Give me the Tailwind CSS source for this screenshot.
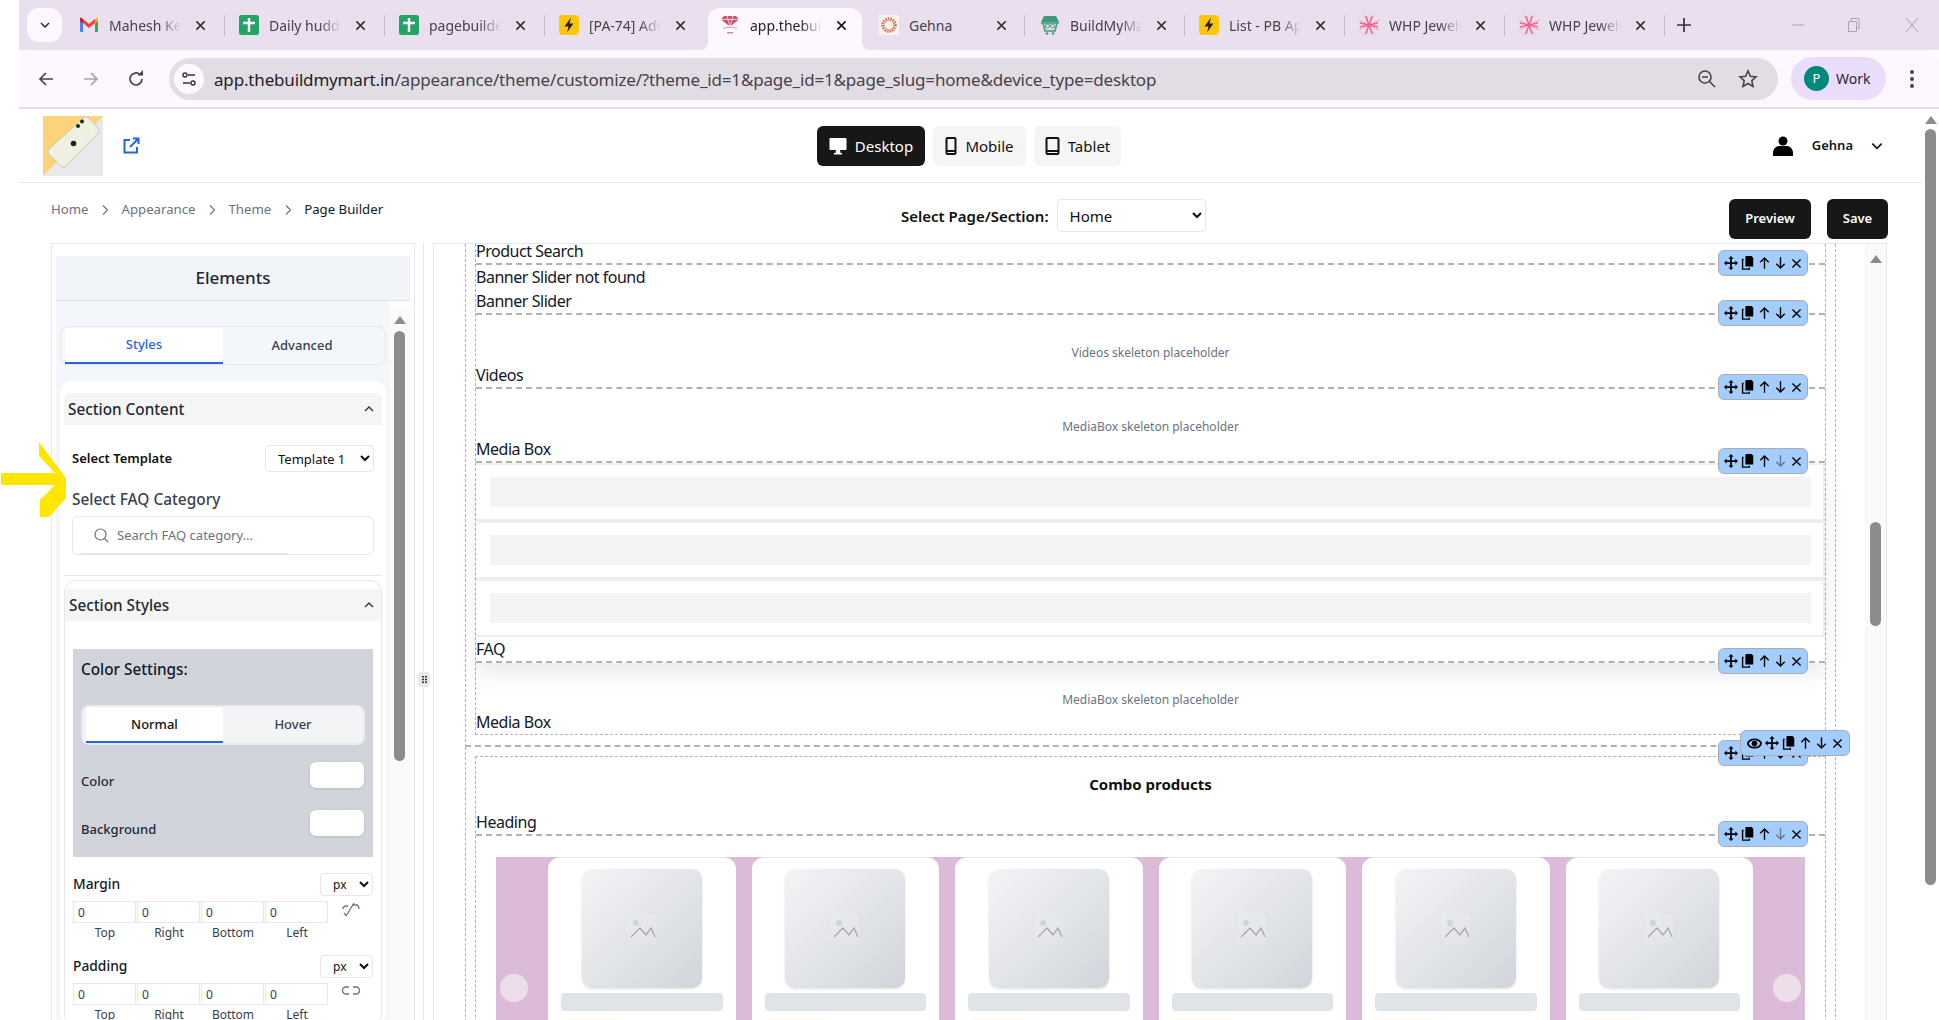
<!DOCTYPE html>
<html lang="en">
<head>
    <meta charset="UTF-8">
    <title>app.thebuildmymart.in</title>
    <script src="https://cdn.jsdelivr.net/npm/@tailwindcss/browser@4"></script>
</head>
<body class="w-[1939px] h-[1020px] overflow-hidden bg-white pl-[19px] font-['Noto_Sans','Open_Sans',sans-serif] text-[#111827]">

<!-- shared icons -->
<svg class="hidden">
    <symbol id="i-move" viewBox="0 0 16 16"><path fill="currentColor" d="M8 0l3 3H9v4h4V5l3 3-3 3V9H9v4h2l-3 3-3-3h2V9H3v2L0 8l3-3v2h4V3H5z"/></symbol>
    <symbol id="i-copy" viewBox="0 0 16 16"><path fill="currentColor" d="M6 0h6l2 2v10H6a1 1 0 0 1-1-1V1a1 1 0 0 1 1-1z"/><path fill="none" stroke="currentColor" stroke-width="1.6" d="M3 4H1.800v11H9.500v-1.500"/></symbol>
    <symbol id="i-up" viewBox="0 0 16 16"><path fill="none" stroke="currentColor" stroke-width="1.700" d="M8 15V2M2.800 7L8 1.800 13.200 7"/></symbol>
    <symbol id="i-down" viewBox="0 0 16 16"><path fill="none" stroke="currentColor" stroke-width="1.700" d="M8 1v13M2.800 9L8 14.200 13.200 9"/></symbol>
    <symbol id="i-slate" viewBox="0 0 16 16"><path fill="none" stroke="#64748b" stroke-width="1.700" d="M8 1v13M2.800 9L8 14.200 13.200 9"/></symbol>
    <symbol id="i-x" viewBox="0 0 16 16"><path fill="none" stroke="currentColor" stroke-width="1.700" d="M3 3l10 10M13 3L3 13"/></symbol>
    <symbol id="i-eye" viewBox="0 0 16 16"><path fill="none" stroke="currentColor" stroke-width="1.900" d="M.8 8c2-6 12.400-6 14.400 0-2 6-12.400 6-14.400 0z"/><circle fill="currentColor" cx="8" cy="8" r="3"/></symbol>
    <symbol id="i-tabx" viewBox="0 0 12 12"><path fill="none" stroke="currentColor" stroke-width="1.700" d="M1.500 1.500l9 9M10.500 1.500l-9 9"/></symbol>
    <symbol id="i-sheet" viewBox="0 0 20 20"><rect width="20" height="20" rx="2.500" fill="#23a566"/><path fill="#fff" d="M8.800 3h2.400v14H8.800zM4 6.800h12v2.400H4z"/></symbol>
    <symbol id="i-bolt" viewBox="0 0 20 20"><rect width="20" height="20" rx="4" fill="#ffc60a"/><path fill="#222" d="M12 2.500L5.500 11.500h4L8 17.500l6.500-9h-4z"/></symbol>
    <symbol id="i-star" viewBox="0 0 20 20"><path fill="none" stroke="#f5a3bd" stroke-width="1" d="M5 0l10 20M15 0L5 20M0 5l20 10M20 5L0 15"/><path fill="none" stroke="#f2608e" stroke-width="1.300" d="M7 1l6 18M13 1L7 19M1 8l18 4M19 8L1 12"/></symbol>
    <symbol id="i-chev" viewBox="0 0 12 12"><path fill="none" stroke="currentColor" stroke-width="1.400" d="M2 8l4-4 4 4"/></symbol>
    <symbol id="i-crumb" viewBox="0 0 8 12"><path fill="none" stroke="#6b7280" stroke-width="1.100" d="M2 1.500L6.500 6 2 10.500"/></symbol>
    <symbol id="i-tri" viewBox="0 0 12 8"><path fill="#8c8c8c" d="M6 0l6 8H0z"/></symbol>
    <symbol id="i-mount" viewBox="0 0 28 30"><rect width="28" height="30" rx="3" fill="#f3f4f6" fill-opacity=".2"/><circle cx="8" cy="9" r="3" fill="#cbd5e1"/><path fill="none" stroke="#a8a8a8" stroke-width="1.300" d="M3 23l9-9 6 7 5-7 4 9"/></symbol>
</svg>

<!-- tab strip -->
<div class="h-[50px] bg-[#e9dfee] flex items-start pl-2 text-[14px] text-[#47434a] relative">
    <div class="w-[35px] h-[34px] mt-2 bg-[#fdf7ff] rounded-xl flex items-center justify-center">
        <svg class="w-3 h-3 text-[#222] rotate-180"><use href="#i-chev"/></svg>
    </div>
    <div class="w-[3px]"></div>

    <div class="w-[160px] h-[34px] mt-2 flex items-center pl-[14px]">
        <svg class="w-5 h-5" viewBox="0 0 20 20"><path fill="#4285f4" d="M1 4h3v13H2a1 1 0 0 1-1-1z"/><path fill="#34a853" d="M16 4h3v12a1 1 0 0 1-1 1h-2z"/><path fill="#ea4335" d="M4 4l6 5 6-5v4l-6 5-6-5z"/><path fill="#fbbc04" d="M16 4l1.500-1.200A1 1 0 0 1 19 3.500V6l-3 2.400z"/><path fill="#c5221f" d="M4 4L2.500 2.800A1 1 0 0 0 1 3.500V6l3 2.400z"/></svg>
        <span class="ml-2.5 w-[72px] whitespace-nowrap overflow-hidden [mask-image:linear-gradient(90deg,#000_70%,transparent)]">Mahesh Kesharwani</span>
        <svg class="ml-[14px] w-[11px] h-[11px] text-[#333]"><use href="#i-tabx"/></svg>
        <div class="ml-auto w-px h-[21px] bg-[#c4bcc9]"></div>
    </div>
    <div class="w-[160px] h-[34px] mt-2 flex items-center pl-[14px]">
        <svg class="w-5 h-5"><use href="#i-sheet"/></svg>
        <span class="ml-2.5 w-[72px] whitespace-nowrap overflow-hidden [mask-image:linear-gradient(90deg,#000_70%,transparent)]">Daily huddle sheet</span>
        <svg class="ml-[14px] w-[11px] h-[11px] text-[#333]"><use href="#i-tabx"/></svg>
        <div class="ml-auto w-px h-[21px] bg-[#c4bcc9]"></div>
    </div>
    <div class="w-[160px] h-[34px] mt-2 flex items-center pl-[14px]">
        <svg class="w-5 h-5"><use href="#i-sheet"/></svg>
        <span class="ml-2.5 w-[72px] whitespace-nowrap overflow-hidden [mask-image:linear-gradient(90deg,#000_70%,transparent)]">pagebuilder sheet</span>
        <svg class="ml-[14px] w-[11px] h-[11px] text-[#333]"><use href="#i-tabx"/></svg>
        <div class="ml-auto w-px h-[21px] bg-[#c4bcc9]"></div>
    </div>
    <div class="w-[160px] h-[34px] mt-2 flex items-center pl-[14px]">
        <svg class="w-5 h-5"><use href="#i-bolt"/></svg>
        <span class="ml-2.5 w-[72px] whitespace-nowrap overflow-hidden [mask-image:linear-gradient(90deg,#000_70%,transparent)]">[PA-74] Add section</span>
        <svg class="ml-[14px] w-[11px] h-[11px] text-[#333]"><use href="#i-tabx"/></svg>
    </div>
    <div class="w-[160px] h-[42px] mt-2 px-[3px]">
        <div class="w-full h-full bg-[#fdf7ff] rounded-t-xl flex items-center pb-2 pl-[12px] text-[#1f1f1f] relative">
            <div class="absolute -left-2 bottom-0 w-2 h-2 bg-[#fdf7ff]"><div class="w-full h-full bg-[#e9dfee] rounded-br-lg"></div></div>
            <div class="absolute -right-2 bottom-0 w-2 h-2 bg-[#fdf7ff]"><div class="w-full h-full bg-[#e9dfee] rounded-bl-lg"></div></div>
            <svg class="w-5 h-5" viewBox="0 0 20 20"><path fill="#c2556f" d="M4 1h12l3 3.500-9 7-9-7z"/><path fill="none" stroke="#fdf7ff" stroke-width=".7" d="M1 4.500h18M7 1l3 10.500L13 1"/><path fill="none" stroke="#c98a9c" stroke-width=".8" d="M3 13.500c4-1.500 10-1.500 14 0"/><path fill="#c98a9c" d="M7 17h6v1.500H7z"/></svg>
            <span class="ml-2.5 w-[72px] whitespace-nowrap overflow-hidden [mask-image:linear-gradient(90deg,#000_70%,transparent)]">app.thebuildmymart</span>
            <svg class="ml-[14px] w-[11px] h-[11px] text-[#111]"><use href="#i-tabx"/></svg>
        </div>
    </div>
    <div class="w-[160px] h-[34px] mt-2 flex items-center pl-[14px]">
        <svg class="w-5 h-5" viewBox="0 0 20 20"><rect width="20" height="20" fill="#f8f3ef"/><circle cx="10" cy="10" r="6" fill="none" stroke="#d0785c" stroke-width="3.500" stroke-dasharray="1.500 .9"/></svg>
        <span class="ml-2.5 w-[72px] whitespace-nowrap overflow-hidden">Gehna</span>
        <svg class="ml-[15px] w-[11px] h-[11px] text-[#333]"><use href="#i-tabx"/></svg>
        <div class="ml-auto w-px h-[21px] bg-[#c4bcc9]"></div>
    </div>
    <div class="w-[160px] h-[34px] mt-2 flex items-center pl-[15px]">
        <svg class="w-5 h-5" viewBox="0 0 20 20"><path fill="#3f9a7d" d="M4 1h12l3 6H1z"/><path fill="none" stroke="#3f9a7d" stroke-width="1.500" d="M3 8l2 8h10l2-8M1 8h18"/><circle cx="7.500" cy="11" r="2" fill="none" stroke="#3f9a7d"/><circle cx="12.500" cy="11" r="2" fill="none" stroke="#3f9a7d"/><circle cx="7" cy="18.500" r="1.300" fill="#3f9a7d"/><circle cx="13" cy="18.500" r="1.300" fill="#3f9a7d"/></svg>
        <span class="ml-2.5 w-[72px] whitespace-nowrap overflow-hidden [mask-image:linear-gradient(90deg,#000_70%,transparent)]">BuildMyMart</span>
        <svg class="ml-[14px] w-[11px] h-[11px] text-[#333]"><use href="#i-tabx"/></svg>
        <div class="ml-auto w-px h-[21px] bg-[#c4bcc9]"></div>
    </div>
    <div class="w-[160px] h-[34px] mt-2 flex items-center pl-[14px]">
        <svg class="w-5 h-5"><use href="#i-bolt"/></svg>
        <span class="ml-2.5 w-[72px] whitespace-nowrap overflow-hidden [mask-image:linear-gradient(90deg,#000_70%,transparent)]">List - PB App</span>
        <svg class="ml-[14px] w-[11px] h-[11px] text-[#333]"><use href="#i-tabx"/></svg>
        <div class="ml-auto w-px h-[21px] bg-[#c4bcc9]"></div>
    </div>
    <div class="w-[160px] h-[34px] mt-2 flex items-center pl-[14px]">
        <svg class="w-5 h-5"><use href="#i-star"/></svg>
        <span class="ml-2.5 w-[72px] whitespace-nowrap overflow-hidden [mask-image:linear-gradient(90deg,#000_70%,transparent)]">WHP Jewellers</span>
        <svg class="ml-[14px] w-[11px] h-[11px] text-[#333]"><use href="#i-tabx"/></svg>
        <div class="ml-auto w-px h-[21px] bg-[#c4bcc9]"></div>
    </div>
    <div class="w-[160px] h-[34px] mt-2 flex items-center pl-[14px]">
        <svg class="w-5 h-5"><use href="#i-star"/></svg>
        <span class="ml-2.5 w-[72px] whitespace-nowrap overflow-hidden [mask-image:linear-gradient(90deg,#000_70%,transparent)]">WHP Jewellers</span>
        <svg class="ml-[14px] w-[11px] h-[11px] text-[#333]"><use href="#i-tabx"/></svg>
        <div class="ml-auto w-px h-[21px] bg-[#c4bcc9]"></div>
    </div>
    <svg class="ml-[12px] mt-[18px] w-3.5 h-3.5 text-[#333]" viewBox="0 0 14 14"><path stroke="currentColor" stroke-width="1.700" d="M7 0v14M0 7h14"/></svg>

    <!-- window controls -->
    <div class="ml-auto flex items-center h-[50px] text-[#a9a3ad]">
        <svg class="w-3.5 h-3.5" viewBox="0 0 14 14"><path stroke="currentColor" d="M1 7h12"/></svg>
        <svg class="ml-[42px] w-3.5 h-3.5" viewBox="0 0 14 14"><path fill="none" stroke="currentColor" d="M1.500 3.500h8v10h-8zM4 3.500V.5h8v10H9.500"/></svg>
        <svg class="ml-[44px] mr-5 w-3.5 h-3.5" viewBox="0 0 14 14"><path stroke="currentColor" d="M1 0l12 14M13 0L1 14"/></svg>
    </div>
</div>

<!-- address bar -->
<div class="h-[59px] bg-[#fdf7ff] border-b-2 border-[#e2dce5] rounded-tr-xl flex items-center text-[#47434a]">
    <svg class="ml-[19px] w-4 h-4" viewBox="0 0 16 16"><path fill="none" stroke="currentColor" stroke-width="1.700" d="M15 8H2M8 2L2 8l6 6"/></svg>
    <svg class="ml-[29px] w-4 h-4 text-[#a8a3ac]" viewBox="0 0 16 16"><path fill="none" stroke="currentColor" stroke-width="1.700" d="M1 8h13M8 2l6 6-6 6"/></svg>
    <svg class="ml-[28px] w-[18px] h-[18px]" viewBox="0 0 18 18"><path fill="none" stroke="currentColor" stroke-width="1.700" d="M15 9a6 6 0 1 1-2-4.500"/><path fill="currentColor" d="M10.500 5.500H16V0z"/></svg>
    <div class="ml-[24px] w-[1609px] h-[42px] bg-[#e2dce5] rounded-full flex items-center pl-[5px] pr-5">
        <div class="w-[30px] h-[30px] bg-[#fdf7ff] rounded-full flex items-center justify-center">
            <svg class="w-4 h-4" viewBox="0 0 16 16"><path fill="none" stroke="#333" stroke-width="1.400" d="M7 4h7M2 12h7"/><circle cx="4" cy="4" r="2" fill="none" stroke="#333" stroke-width="1.400"/><circle cx="12" cy="12" r="2" fill="none" stroke="#333" stroke-width="1.400"/></svg>
        </div>
        <div class="ml-[10px] mt-[2px] text-[17px] whitespace-nowrap tracking-[-0.17px]"><span class="text-[#1f1f1f]">app.thebuildmymart.in</span>/appearance/theme/customize/?theme_id=1&amp;page_id=1&amp;page_slug=home&amp;device_type=desktop</div>
        <svg class="ml-auto w-5 h-5" viewBox="0 0 20 20"><circle cx="8" cy="8" r="6" fill="none" stroke="currentColor" stroke-width="1.600"/><path stroke="currentColor" stroke-width="1.600" d="M5 8h6M12.500 12.500L18 18"/></svg>
        <svg class="ml-[21px] w-5 h-5" viewBox="0 0 20 20"><path fill="none" stroke="currentColor" stroke-width="1.600" d="M10 2l2.400 5.300 5.600.6-4.200 3.800 1.200 5.700L10 14.500l-5 2.900 1.200-5.700L2 7.900l5.600-.6z"/></svg>
    </div>
    <div class="ml-[13px] w-[95px] h-[43px] bg-[#eadcfb] rounded-full flex items-center pl-[13px] text-[#2b1f3a]">
        <div class="w-[25px] h-[25px] rounded-full bg-[#00897b] text-white text-[13px] flex items-center justify-center">P</div>
        <span class="ml-[7px] text-[14px]">Work</span>
    </div>
    <svg class="ml-[24px] w-1 h-[18px]" viewBox="0 0 4 18"><circle cx="2" cy="2" r="2" fill="currentColor"/><circle cx="2" cy="9" r="2" fill="currentColor"/><circle cx="2" cy="16" r="2" fill="currentColor"/></svg>
</div>

<div class="flex h-[911px]">
    <div class="w-[1903px] shrink-0 overflow-hidden">

        <!-- header -->
        <header class="h-[74px] border-b border-[#e5e7eb] flex items-center relative">
            <svg class="ml-6 w-[60px] h-[60px]" viewBox="0 0 60 60"><rect width="60" height="60" fill="#e9e9ec"/><path fill="#fdd37a" d="M0 0h60L0 60z"/><path fill="#f0f0e0" stroke="#c9c9b4" stroke-linejoin="round" d="M41 1.500a4 4 0 0 1 5 .5l9 10a4 4 0 0 1 0 5.500L23 50a4 4 0 0 1-5 .5L6 38a4 4 0 0 1 0-5z"/><circle cx="39" cy="5.500" r="2" fill="#222"/><circle cx="35" cy="10" r="2" fill="#222"/><circle cx="30.500" cy="27.500" r="2.800" fill="#222"/></svg>
            <svg class="ml-5 w-[17px] h-[17px] text-[#2563eb]" viewBox="0 0 17 17"><path fill="none" stroke="currentColor" stroke-width="2" d="M7 3H1.500v12.500H14V10M7 10l8-8M10 1.500h5.500V7"/></svg>

            <div class="absolute left-[798px] top-[17px] flex gap-2 text-[15px]">
                <div class="w-[108px] h-10 bg-[#171717] text-white rounded-md flex items-center justify-center gap-[8px]">
                    <svg class="w-[18px] h-[18px]" viewBox="0 0 18 18"><path fill="currentColor" d="M1.500 1h15a1 1 0 0 1 1 1v10a1 1 0 0 1-1 1h-15a1 1 0 0 1-1-1V2a1 1 0 0 1 1-1zM7 13h4l.5 3H13v1.500H5V16h1.500z"/></svg>Desktop
                </div>
                <div class="w-[93px] h-10 bg-[#f5f5f5] text-[#111] rounded-md flex items-center justify-center gap-[8px]">
                    <svg class="w-3 h-[18px]" viewBox="0 0 12 18"><path fill="none" stroke="currentColor" stroke-width="2" d="M2.500 1h7a1 1 0 0 1 1 1v14a1 1 0 0 1-1 1h-7a1 1 0 0 1-1-1V2a1 1 0 0 1 1-1zM1.500 14h9"/></svg>Mobile
                </div>
                <div class="w-[87px] h-10 bg-[#f5f5f5] text-[#111] rounded-md flex items-center justify-center gap-[8px]">
                    <svg class="w-[15px] h-[18px]" viewBox="0 0 15 18"><path fill="none" stroke="currentColor" stroke-width="2" d="M2.500 1h10a1 1 0 0 1 1 1v14a1 1 0 0 1-1 1h-10a1 1 0 0 1-1-1V2a1 1 0 0 1 1-1zM1.500 14h12"/></svg>Tablet
                </div>
            </div>

            <div class="ml-auto flex items-center mr-[38px]">
                <svg class="w-5 h-5" viewBox="0 0 20 20"><circle cx="10" cy="5" r="4.500"/><path d="M0 20v-3c0-4 3-7 6-7h8c3 0 6 3 6 7v3z"/></svg>
                <span class="ml-[19px] text-[13px] font-semibold">Gehna</span>
                <svg class="ml-[17px] w-[14px] h-[14px] rotate-180 text-[#111]"><use href="#i-chev"/></svg>
            </div>
        </header>

        <!-- breadcrumb / page select -->
        <div class="h-[60px] relative text-[13.200px]">
            <nav class="absolute left-[32px] top-[17px] flex items-center text-[#6b7280]">
                <span>Home</span><svg class="mx-[12.500px] w-2 h-3"><use href="#i-crumb"/></svg>
                <span>Appearance</span><svg class="mx-[12.500px] w-2 h-3"><use href="#i-crumb"/></svg>
                <span>Theme</span><svg class="mx-[12.500px] w-2 h-3"><use href="#i-crumb"/></svg>
                <span class="text-[#111827]">Page Builder</span>
            </nav>
            <div class="absolute left-[882px] top-4 flex items-center">
                <span class="text-[15px] font-semibold text-[#111] mr-2 pt-[2px]">Select Page/Section:</span>
                <select class="w-[149px] h-[33px] border border-[#e5e7eb] rounded pl-2 text-[15px] text-[#111]"><option>Home</option></select>
            </div>
            <div class="absolute left-[1710px] top-4 flex gap-[16px] text-[13px] font-semibold text-white">
                <div class="w-[82px] h-10 bg-[#171717] rounded-md flex items-center justify-center">Preview</div>
                <div class="w-[61px] h-10 bg-[#171717] rounded-md flex items-center justify-center">Save</div>
            </div>
        </div>

        <!-- builder -->
        <div class="flex items-start h-[777px] overflow-hidden">

            <!-- elements panel -->
            <aside class="ml-[32px] w-[364px] h-[800px] shrink-0 border border-[#e5e7eb] pt-3 px-1 bg-white">
                <div class="h-[45px] bg-[#f1f4f8] border-b border-[#dfe3e8] flex items-center justify-center text-[17px] font-medium text-[#1f2937]">Elements</div>
                <div class="flex">
                    <div class="w-[334px] h-[760px] bg-[#f3f6fa] px-1 pt-[25px]">
                        <div class="h-[39px] border border-[#e5e7eb] rounded-lg bg-[#f3f6fa] flex px-1 pt-[1px] text-[13px] font-medium text-[#374151]">
                            <div class="w-[158px] h-9 bg-white border-b-2 border-[#2563eb] text-[#2563eb] flex items-center justify-center">Styles</div>
                            <div class="flex-1 h-9 flex items-center justify-center">Advanced</div>
                        </div>

                        <div class="mt-[16px] bg-white rounded-xl px-1 pt-3">
                            <!-- section content -->
                            <div class="h-[183px] border-b border-[#e5e7eb]">
                                <div class="h-8 bg-[#f5f5f5] rounded-t-md flex items-center justify-between px-1 pr-[7px] text-[15.300px] font-medium text-[#1f2937]">
                                    Section Content
                                    <svg class="w-3 h-3 text-[#333]"><use href="#i-chev"/></svg>
                                </div>
                                <div class="mt-5 ml-2 mr-2 flex items-center justify-between">
                                    <span class="text-[13px] font-semibold text-[#111]">Select Template</span>
                                    <select class="w-[109px] h-[27px] border border-[#e5e7eb] rounded pl-2 text-[13px] text-[#111]"><option>Template 1</option></select>
                                </div>
                                <div class="mt-[18px] ml-2 text-[15.400px] font-medium text-[#374151] leading-[20px]">Select FAQ Category</div>
                                <div class="mt-[6px] ml-2 mr-2 h-[39px] border border-[#e5e7eb] rounded-md flex items-center pl-[21px] relative">
                                    <svg class="w-[15px] h-[15px]" viewBox="0 0 15 15"><circle cx="6.500" cy="6.500" r="5.500" fill="none" stroke="#6b7280" stroke-width="1.200"/><path stroke="#6b7280" stroke-width="1.200" d="M10.500 10.500L14 14"/></svg>
                                    <input class="ml-2 w-[200px] text-[13px] outline-none placeholder:text-[#6b7280]" placeholder="Search FAQ category...">
                                    <div class="absolute left-2 bottom-0 w-[207px] h-[1px] bg-[#e5e7eb]"></div>
                                </div>
                            </div>

                            <!-- section styles -->
                            <div class="mt-[4px] border border-[#e5e7eb] rounded-xl pt-2">
                                <div class="h-8 bg-[#f5f5f5] flex items-center justify-between pl-1 pr-[6px] text-[15.300px] font-medium text-[#1f2937]">
                                    Section Styles
                                    <svg class="w-3 h-3 text-[#333]"><use href="#i-chev"/></svg>
                                </div>
                                <div class="px-2 mt-7">
                                    <div class="h-[208px] bg-[#d1d5db] px-2 pt-2">
                                        <div class="text-[15.300px] font-medium text-[#111827] leading-6">Color Settings:</div>
                                        <div class="mt-[24px] h-10 border-2 border-[#e9ebef] rounded-lg bg-[#f3f4f6] flex pl-[3px] text-[13px] font-medium">
                                            <div class="w-[137px] h-9 bg-white border-b-2 border-[#2563eb] text-[#111] flex items-center justify-center pt-[2px]">Normal</div>
                                            <div class="flex-1 h-9 flex items-center justify-center text-[#374151]">Hover</div>
                                        </div>
                                        <div class="mt-[17px] h-[26px] flex items-center justify-between pr-[1px]">
                                            <span class="text-[13px] font-medium text-[#1f2937] pt-[14px]">Color</span>
                                            <div class="w-[54px] h-[26px] bg-white rounded-md shadow-sm"></div>
                                        </div>
                                        <div class="mt-[22px] h-[26px] flex items-center justify-between pr-[1px]">
                                            <span class="text-[13px] font-medium text-[#1f2937] pt-[14px]">Background</span>
                                            <div class="w-[54px] h-[26px] bg-white rounded-md shadow-sm"></div>
                                        </div>
                                    </div>

                                    <div class="mt-4 h-[23px] flex items-center justify-between">
                                        <span class="text-[13.800px] font-medium text-[#111827]">Margin</span>
                                        <select class="w-[53px] h-[23px] border border-[#e5e7eb] rounded pl-2 text-[12px] text-[#111]"><option>px</option></select>
                                    </div>
                                    <div class="mt-[5px] flex items-start">
                                        <div class="w-[64px] text-[12px] text-center text-[#374151]"><input value="0" class="w-[63px] h-[22px] border border-[#e5e7eb] px-1 text-[12px] block"><span class="block leading-[18px] mt-[1px]">Top</span></div>
                                        <div class="w-[64px] text-[12px] text-center text-[#374151]"><input value="0" class="w-[63px] h-[22px] border border-[#e5e7eb] px-1 text-[12px] block"><span class="block leading-[18px] mt-[1px]">Right</span></div>
                                        <div class="w-[64px] text-[12px] text-center text-[#374151]"><input value="0" class="w-[63px] h-[22px] border border-[#e5e7eb] px-1 text-[12px] block"><span class="block leading-[18px] mt-[1px]">Bottom</span></div>
                                        <div class="w-[64px] text-[12px] text-center text-[#374151]"><input value="0" class="w-[63px] h-[22px] border border-[#e5e7eb] px-1 text-[12px] block"><span class="block leading-[18px] mt-[1px]">Left</span></div>
                                        <svg class="ml-[13px] w-[18px] h-[18px]" viewBox="0 0 18 18"><path fill="none" stroke="#6b7280" stroke-width="1.300" d="M1 8c0-2 2-3 4-3h1M17 8c0-3-2-5-4-4l-3 0M4 15L12 2M2 12l2 3"/></svg>
                                    </div>

                                    <div class="mt-[13px] h-[23px] flex items-center justify-between">
                                        <span class="text-[13.800px] font-medium text-[#111827]">Padding</span>
                                        <select class="w-[53px] h-[23px] border border-[#e5e7eb] rounded pl-2 text-[12px] text-[#111]"><option>px</option></select>
                                    </div>
                                    <div class="mt-[5px] flex items-start">
                                        <div class="w-[64px] text-[12px] text-center text-[#374151]"><input value="0" class="w-[63px] h-[22px] border border-[#e5e7eb] px-1 text-[12px] block"><span class="block leading-[18px] mt-[1px]">Top</span></div>
                                        <div class="w-[64px] text-[12px] text-center text-[#374151]"><input value="0" class="w-[63px] h-[22px] border border-[#e5e7eb] px-1 text-[12px] block"><span class="block leading-[18px] mt-[1px]">Right</span></div>
                                        <div class="w-[64px] text-[12px] text-center text-[#374151]"><input value="0" class="w-[63px] h-[22px] border border-[#e5e7eb] px-1 text-[12px] block"><span class="block leading-[18px] mt-[1px]">Bottom</span></div>
                                        <div class="w-[64px] text-[12px] text-center text-[#374151]"><input value="0" class="w-[63px] h-[22px] border border-[#e5e7eb] px-1 text-[12px] block"><span class="block leading-[18px] mt-[1px]">Left</span></div>
                                        <svg class="ml-[13px] w-[18px] h-[18px]" viewBox="0 0 18 18"><path fill="none" stroke="#6b7280" stroke-width="1.300" d="M7 4H4a3.500 3.500 0 0 0 0 7h3M11 4h3a3.500 3.500 0 0 1 0 7h-3"/></svg>
                                    </div>
                                </div>
                            </div>
                        </div>
                    </div>
                    <!-- panel scrollbar -->
                    <div class="w-[19px] h-[760px] bg-[#fafafa] mt-2 flex flex-col items-center pt-[7px]">
                        <svg class="w-3 h-2"><use href="#i-tri"/></svg>
                        <div class="mt-[7px] w-[11px] h-[430px] bg-[#8c8c8c] rounded-full"></div>
                    </div>
                </div>
            </aside>

            <!-- resizer -->
            <div class="w-[18px] h-[800px] shrink-0 relative">
                <div class="ml-[8px] w-px h-full bg-[#e5e7eb]"></div>
                <div class="absolute left-[3px] top-[429px] w-3 h-[15px] bg-[#e8e8e8] rounded flex items-center justify-center">
                    <svg class="w-[5px] h-[7px]" viewBox="0 0 5 7"><path fill="#333" d="M0 0h2v1.500H0zM3 0h2v1.500H3zM0 2.750h2v1.500H0zM3 2.750h2v1.500H3zM0 5.500h2V7H0zM3 5.500h2V7H3z"/></svg>
                </div>
            </div>

            <!-- canvas panel -->
            <section class="w-[1454px] h-[800px] shrink-0 border border-[#e5e7eb] flex overflow-hidden text-[16px] leading-6 text-[#111827]">
                <div class="w-[1430px] shrink-0 pl-[31px]">

                    <!-- outer section 1 -->
                    <div class="w-[1371px] border-x border-dashed border-[#b5b0a8] border-b-2 px-[9px] relative">
                        <div class="border-x border-dashed border-[#b5b0a8] border-b border-b-[#b5b0a8] tracking-[-0.47px]">

                            <div class="h-[21px] border-b-2 border-dashed border-[#b5b0a8] relative flex items-end">
                                <span>Product Search</span>
                                <div class="absolute right-[17px] -bottom-[13px] w-[90px] h-[26px] z-10 bg-[#a3cdfc] border border-[#a9adb3] rounded-md flex items-center justify-center gap-[3px] text-black">
                                    <svg class="w-[14px] h-[14px]"><use href="#i-move"/></svg><svg class="w-[14px] h-[14px]"><use href="#i-copy"/></svg><svg class="w-[13px] h-[14px]"><use href="#i-up"/></svg><svg class="w-[13px] h-[14px]"><use href="#i-down"/></svg><svg class="w-[13px] h-[13px]"><use href="#i-x"/></svg>
                                </div>
                            </div>

                            <div class="h-[50px] border-b-2 border-dashed border-[#b5b0a8] relative">
                                <div>Banner Slider not found</div>
                                <div>Banner Slider</div>
                                <div class="absolute right-[17px] -bottom-[13px] w-[90px] h-[26px] z-10 bg-[#a3cdfc] border border-[#a9adb3] rounded-md flex items-center justify-center gap-[3px] text-black">
                                    <svg class="w-[14px] h-[14px]"><use href="#i-move"/></svg><svg class="w-[14px] h-[14px]"><use href="#i-copy"/></svg><svg class="w-[13px] h-[14px]"><use href="#i-up"/></svg><svg class="w-[13px] h-[14px]"><use href="#i-down"/></svg><svg class="w-[13px] h-[13px]"><use href="#i-x"/></svg>
                                </div>
                            </div>

                            <div class="h-[74px] border-b-2 border-dashed border-[#b5b0a8] relative pt-[26px]">
                                <div class="h-[22px] text-center text-[12px] text-[#6b7280] tracking-normal">Videos skeleton placeholder</div>
                                <div>Videos</div>
                                <div class="absolute right-[17px] -bottom-[13px] w-[90px] h-[26px] z-10 bg-[#a3cdfc] border border-[#a9adb3] rounded-md flex items-center justify-center gap-[3px] text-black">
                                    <svg class="w-[14px] h-[14px]"><use href="#i-move"/></svg><svg class="w-[14px] h-[14px]"><use href="#i-copy"/></svg><svg class="w-[13px] h-[14px]"><use href="#i-up"/></svg><svg class="w-[13px] h-[14px]"><use href="#i-down"/></svg><svg class="w-[13px] h-[13px]"><use href="#i-x"/></svg>
                                </div>
                            </div>

                            <div class="h-[74px] border-b-2 border-dashed border-[#b5b0a8] relative pt-[26px]">
                                <div class="h-[22px] text-center text-[12px] text-[#6b7280] tracking-normal">MediaBox skeleton placeholder</div>
                                <div>Media Box</div>
                                <div class="absolute right-[17px] -bottom-[13px] w-[90px] h-[26px] z-10 bg-[#a3cdfc] border border-[#a9adb3] rounded-md flex items-center justify-center gap-[3px] text-black">
                                    <svg class="w-[14px] h-[14px]"><use href="#i-move"/></svg><svg class="w-[14px] h-[14px]"><use href="#i-copy"/></svg><svg class="w-[13px] h-[14px]"><use href="#i-up"/></svg><svg class="w-[13px] h-[14px]"><use href="#i-slate"/></svg><svg class="w-[13px] h-[13px]"><use href="#i-x"/></svg>
                                </div>
                            </div>

                            <!-- FAQ -->
                            <div class="h-[200px] border-b-2 border-dashed border-[#b5b0a8] relative shadow-[0_12px_20px_rgba(0,0,0,0.08)]">
                                <div class="bg-[#eeeeee] pt-[2px] pr-[2px] h-[174px] flex flex-col gap-1">
                                    <div class="h-[54px] bg-white pl-[14px] pr-3 pt-3"><div class="h-[30px] bg-[#f4f4f4]"></div></div>
                                    <div class="h-[54px] bg-white pl-[14px] pr-3 pt-3"><div class="h-[30px] bg-[#f4f4f4]"></div></div>
                                    <div class="h-[54px] bg-white pl-[14px] pr-3 pt-3"><div class="h-[30px] bg-[#f4f4f4]"></div></div>
                                </div>
                                <div>FAQ</div>
                                <div class="absolute right-[17px] -bottom-[13px] w-[90px] h-[26px] z-10 bg-[#a3cdfc] border border-[#a9adb3] rounded-md flex items-center justify-center gap-[3px] text-black">
                                    <svg class="w-[14px] h-[14px]"><use href="#i-move"/></svg><svg class="w-[14px] h-[14px]"><use href="#i-copy"/></svg><svg class="w-[13px] h-[14px]"><use href="#i-up"/></svg><svg class="w-[13px] h-[14px]"><use href="#i-down"/></svg><svg class="w-[13px] h-[13px]"><use href="#i-x"/></svg>
                                </div>
                            </div>

                            <div class="h-[71px] pt-[25px] relative">
                                <div class="h-[22px] text-center text-[12px] text-[#6b7280] tracking-normal">MediaBox skeleton placeholder</div>
                                <div>Media Box</div>
                            </div>
                        </div>
                        <div class="h-[10px]"></div>

                        <!-- toolbars on the outer section edge -->
                        <div class="absolute right-[27px] -bottom-[21px] w-[90px] h-[26px] z-10 bg-[#a3cdfc] border border-[#a9adb3] rounded-md flex items-center justify-center gap-[3px] text-black">
                            <svg class="w-[14px] h-[14px]"><use href="#i-move"/></svg><svg class="w-[14px] h-[14px]"><use href="#i-copy"/></svg><svg class="w-[13px] h-[14px]"><use href="#i-up"/></svg><svg class="w-[13px] h-[14px]"><use href="#i-down"/></svg><svg class="w-[13px] h-[13px]"><use href="#i-x"/></svg>
                        </div>
                        <div class="absolute -right-[15px] -bottom-[11px] w-[110px] h-[26px] z-20 bg-[#a3cdfc] border border-[#a9adb3] rounded-md flex items-center justify-center gap-[3px] text-black">
                            <svg class="w-[15px] h-[15px]"><use href="#i-eye"/></svg><svg class="w-[14px] h-[14px]"><use href="#i-move"/></svg><svg class="w-[14px] h-[14px]"><use href="#i-copy"/></svg><svg class="w-[13px] h-[14px]"><use href="#i-up"/></svg><svg class="w-[13px] h-[14px]"><use href="#i-down"/></svg><svg class="w-[13px] h-[13px]"><use href="#i-x"/></svg>
                        </div>
                    </div>

                    <!-- outer section 2 -->
                    <div class="w-[1371px] border-x border-dashed border-[#b5b0a8] px-[9px] pt-[9px] h-[300px]">
                        <div class="h-full border-x border-t border-dashed border-[#b5b0a8] tracking-[-0.47px]">
                            <div class="h-[79px] border-b-2 border-dashed border-[#b5b0a8] relative pt-[15px]">
                                <div class="text-center text-[15px] font-bold text-[#111] tracking-normal">Combo products</div>
                                <div class="mt-[14px]">Heading</div>
                                <div class="absolute right-[17px] -bottom-[13px] w-[90px] h-[26px] z-10 bg-[#a3cdfc] border border-[#a9adb3] rounded-md flex items-center justify-center gap-[3px] text-black">
                                    <svg class="w-[14px] h-[14px]"><use href="#i-move"/></svg><svg class="w-[14px] h-[14px]"><use href="#i-copy"/></svg><svg class="w-[13px] h-[14px]"><use href="#i-up"/></svg><svg class="w-[13px] h-[14px]"><use href="#i-slate"/></svg><svg class="w-[13px] h-[13px]"><use href="#i-x"/></svg>
                                </div>
                            </div>

                            <!-- product carousel skeleton -->
                            <div class="pl-[20px] pt-[21px]">
                                <div class="w-[1309px] h-[200px] bg-[#dcbbd9] pl-[52px] flex gap-4 relative">
                                    <div class="w-[187.500px] h-full shrink-0 bg-white rounded-t-xl border-t border-[#e5e7eb] pt-[11px]">
                                        <div class="mx-auto w-[120px] h-[119px] rounded-[10px] bg-linear-to-br from-[#f3f4f6] to-[#d1d5db] shadow-sm flex items-center justify-center"><svg class="w-7 h-[30px]"><use href="#i-mount"/></svg></div>
                                        <div class="mx-[13px] mt-[5px] h-[18px] bg-[#e0e3e7] rounded"></div>
                                        <div class="ml-[15px] mt-2 w-14 h-3 bg-[#fefce8]"></div>
                                    </div>
                                    <div class="w-[187.500px] h-full shrink-0 bg-white rounded-t-xl border-t border-[#e5e7eb] pt-[11px]">
                                        <div class="mx-auto w-[120px] h-[119px] rounded-[10px] bg-linear-to-br from-[#f3f4f6] to-[#d1d5db] shadow-sm flex items-center justify-center"><svg class="w-7 h-[30px]"><use href="#i-mount"/></svg></div>
                                        <div class="mx-[13px] mt-[5px] h-[18px] bg-[#e0e3e7] rounded"></div>
                                        <div class="ml-[15px] mt-2 w-14 h-3 bg-[#fefce8]"></div>
                                    </div>
                                    <div class="w-[187.500px] h-full shrink-0 bg-white rounded-t-xl border-t border-[#e5e7eb] pt-[11px]">
                                        <div class="mx-auto w-[120px] h-[119px] rounded-[10px] bg-linear-to-br from-[#f3f4f6] to-[#d1d5db] shadow-sm flex items-center justify-center"><svg class="w-7 h-[30px]"><use href="#i-mount"/></svg></div>
                                        <div class="mx-[13px] mt-[5px] h-[18px] bg-[#e0e3e7] rounded"></div>
                                        <div class="ml-[15px] mt-2 w-14 h-3 bg-[#fefce8]"></div>
                                    </div>
                                    <div class="w-[187.500px] h-full shrink-0 bg-white rounded-t-xl border-t border-[#e5e7eb] pt-[11px]">
                                        <div class="mx-auto w-[120px] h-[119px] rounded-[10px] bg-linear-to-br from-[#f3f4f6] to-[#d1d5db] shadow-sm flex items-center justify-center"><svg class="w-7 h-[30px]"><use href="#i-mount"/></svg></div>
                                        <div class="mx-[13px] mt-[5px] h-[18px] bg-[#e0e3e7] rounded"></div>
                                        <div class="ml-[15px] mt-2 w-14 h-3 bg-[#fefce8]"></div>
                                    </div>
                                    <div class="w-[187.500px] h-full shrink-0 bg-white rounded-t-xl border-t border-[#e5e7eb] pt-[11px]">
                                        <div class="mx-auto w-[120px] h-[119px] rounded-[10px] bg-linear-to-br from-[#f3f4f6] to-[#d1d5db] shadow-sm flex items-center justify-center"><svg class="w-7 h-[30px]"><use href="#i-mount"/></svg></div>
                                        <div class="mx-[13px] mt-[5px] h-[18px] bg-[#e0e3e7] rounded"></div>
                                        <div class="ml-[15px] mt-2 w-14 h-3 bg-[#fefce8]"></div>
                                    </div>
                                    <div class="w-[187.500px] h-full shrink-0 bg-white rounded-t-xl border-t border-[#e5e7eb] pt-[11px]">
                                        <div class="mx-auto w-[120px] h-[119px] rounded-[10px] bg-linear-to-br from-[#f3f4f6] to-[#d1d5db] shadow-sm flex items-center justify-center"><svg class="w-7 h-[30px]"><use href="#i-mount"/></svg></div>
                                        <div class="mx-[13px] mt-[5px] h-[18px] bg-[#e0e3e7] rounded"></div>
                                        <div class="ml-[15px] mt-2 w-14 h-3 bg-[#fefce8]"></div>
                                    </div>
                                    <!-- carousel arrows -->
                                    <div class="absolute left-[4px] top-[117px] w-7 h-7 rounded-full bg-[#ecdfea]"></div>
                                    <div class="absolute right-[4px] top-[117px] w-7 h-7 rounded-full bg-[#ecdfea]"></div>
                                </div>
                            </div>
                        </div>
                    </div>
                </div>

                <!-- canvas scrollbar -->
                <div class="ml-[1px] w-[22px] bg-[#fafafa] flex flex-col items-center pt-[11px]">
                    <svg class="w-3 h-2"><use href="#i-tri"/></svg>
                    <div class="mt-[259px] w-[11px] h-[104px] bg-[#8c8c8c] rounded-full"></div>
                </div>
            </section>
        </div>
    </div>

    <!-- page scrollbar -->
    <div class="w-[17px] shrink-0 flex flex-col items-center pt-[7px]">
        <svg class="w-3 h-2"><use href="#i-tri"/></svg>
        <div class="mt-[5px] w-[11px] h-[756px] bg-[#8c8c8c] rounded-full"></div>
    </div>
</div>

<!-- hand-drawn annotation over the screenshot -->
<svg class="absolute left-0 top-[440px] w-[68px] h-[80px]" viewBox="0 0 68 80"><path fill="#ffe600" d="M39 2l27 36v20L49 77h-9V60l15-15H1V33h54L39 16z"/></svg>
</body>
</html>
